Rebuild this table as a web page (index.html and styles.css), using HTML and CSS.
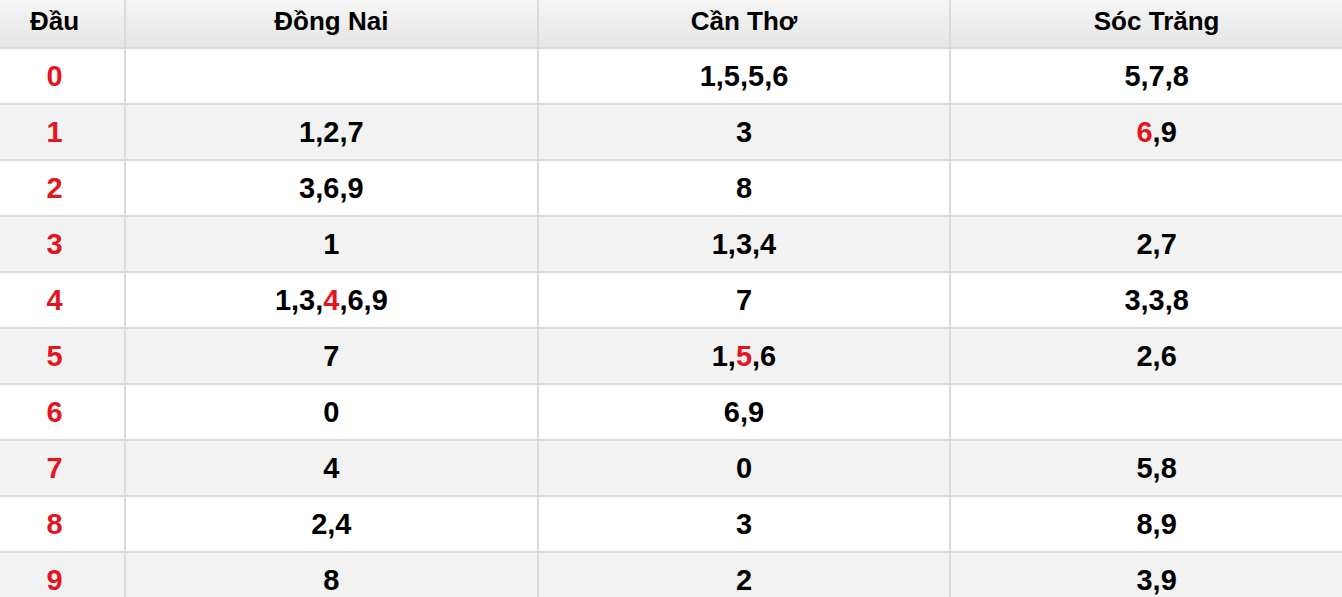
FILE: index.html
```html
<!DOCTYPE html>
<html lang="vi">
<head>
<meta charset="utf-8">
<title>Loto đầu</title>
<link rel="stylesheet" href="styles.css">
</head>
<body>
<table class="loto">
  <colgroup>
    <col class="c-dau">
    <col class="c-prov">
    <col class="c-prov">
    <col class="c-prov">
  </colgroup>
  <thead>
    <tr><th>Đầu</th><th>Đồng Nai</th><th>Cần Thơ</th><th>Sóc Trăng</th></tr>
  </thead>
  <tbody>
    <tr><td class="head">0</td><td></td><td>1,5,5,6</td><td>5,7,8</td></tr>
    <tr><td class="head">1</td><td>1,2,7</td><td>3</td><td><span class="hl">6</span>,9</td></tr>
    <tr><td class="head">2</td><td>3,6,9</td><td>8</td><td></td></tr>
    <tr><td class="head">3</td><td>1</td><td>1,3,4</td><td>2,7</td></tr>
    <tr><td class="head">4</td><td>1,3,<span class="hl">4</span>,6,9</td><td>7</td><td>3,3,8</td></tr>
    <tr><td class="head">5</td><td>7</td><td>1,<span class="hl">5</span>,6</td><td>2,6</td></tr>
    <tr><td class="head">6</td><td>0</td><td>6,9</td><td></td></tr>
    <tr><td class="head">7</td><td>4</td><td>0</td><td>5,8</td></tr>
    <tr><td class="head">8</td><td>2,4</td><td>3</td><td>8,9</td></tr>
    <tr><td class="head">9</td><td>8</td><td>2</td><td>3,9</td></tr>
  </tbody>
</table>
</body>
</html>
```

FILE: styles.css
```css
html, body {
  margin: 0;
  padding: 0;
  overflow: hidden;
  background: #fff;
}

.loto {
  border-collapse: collapse;
  table-layout: fixed;
  width: 1378px;
  margin-left: -15px;
  font-family: "Liberation Sans", Arial, sans-serif;
  font-weight: bold;
  color: #000;
}

.c-dau { width: 140px; }
.c-prov { width: 412.67px; }

.loto th,
.loto td {
  border: 2px solid #dadada;
  text-align: center;
  padding: 0;
}

.loto tr > :first-child { border-left: none; }
.loto thead th { border-top: none; }

.loto th {
  height: 48px;
  font-size: 26px;
  line-height: 26px;
  background: linear-gradient(to bottom, #f6f6f6 0%, #ececec 60%, #e5e5e5 100%);
  padding-bottom: 5px;
  box-sizing: border-box;
}

.loto td {
  height: 54px;
  font-size: 29px;
  line-height: 30px;
}

.loto tbody tr:nth-child(odd) td { background: #fff; }
.loto tbody tr:nth-child(even) td { background: #f2f2f2; }

.loto td.head,
.loto .hl {
  color: #e3161f;
}
```
